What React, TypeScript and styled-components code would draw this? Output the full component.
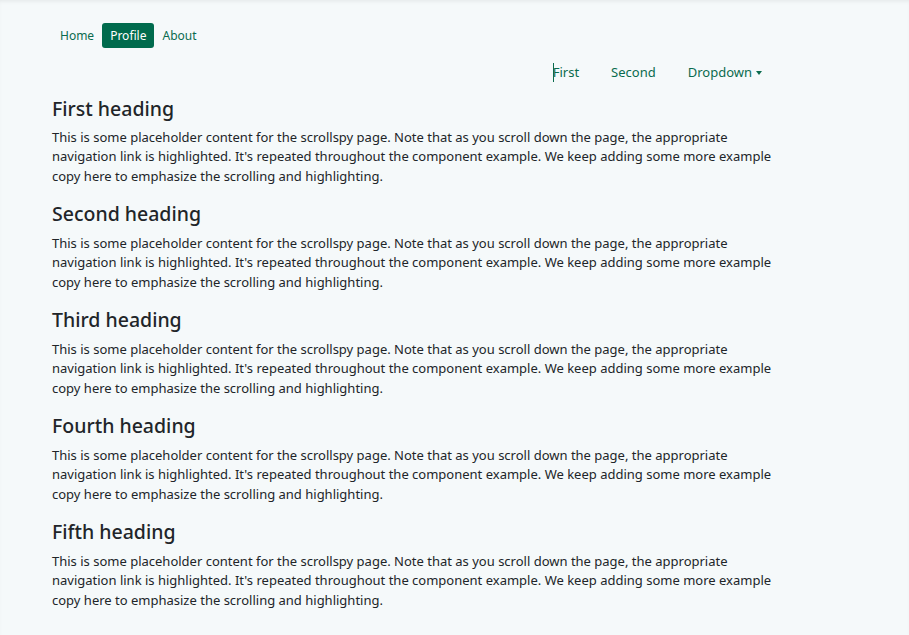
import React from "react";
import styled, { createGlobalStyle } from "styled-components";

const GlobalStyle = createGlobalStyle`
  html, body { margin: 0; padding: 0; }
  body {
    background: #f5f9fa;
    font-family: "Noto Sans", "Open Sans", sans-serif;
    color: #212529;
  }
`;

const Page = styled.div`
  min-height: 635px;
  box-sizing: border-box;
  padding: 23px 0 20px 52px;
  box-shadow: inset 0 3px 4px -2px rgba(0, 0, 0, 0.08);
`;

const Container = styled.div`
  width: 726px;
`;

const Pills = styled.nav`
  display: flex;
  align-items: center;
`;

const PillLink = styled.a<{ $active?: boolean }>`
  display: block;
  font-size: 12px;
  line-height: 17px;
  padding: 4px 8px;
  border-radius: 3px;
  text-decoration: none;
  color: ${(p) => (p.$active ? "#ffffff" : "#0a6b4e")};
  background: ${(p) => (p.$active ? "#006b4d" : "transparent")};
`;

const SpyNav = styled.nav`
  display: flex;
  justify-content: flex-end;
  margin-top: 7px;
`;

const SpyLink = styled.a<{ $caret?: boolean }>`
  position: relative;
  display: flex;
  align-items: center;
  font-size: 13px;
  line-height: 19.5px;
  padding: 8px 16px;
  color: #0a6b4e;
  text-decoration: none;
  ${(p) =>
    p.$caret
      ? `&::before {
    content: "";
    position: absolute;
    left: 16px;
    top: 8px;
    width: 1px;
    height: 19px;
    background: #0a6b4e;
  }`
      : ""}
`;

const Caret = styled.span`
  display: inline-block;
  margin-left: 4px;
  margin-top: 1px;
  width: 0;
  height: 0;
  border-top: 4px solid #0a6b4e;
  border-left: 3.5px solid transparent;
  border-right: 3.5px solid transparent;
`;

const Section = styled.section``;

const Heading = styled.h4`
  margin: 6px 0 7.4px;
  font-size: 19.5px;
  font-weight: 500;
  line-height: 24px;
  color: #212529;
`;

const Paragraph = styled.p`
  margin: 0 0 16.1px;
  font-size: 13px;
  line-height: 19.5px;
`;

const text =
  "This is some placeholder content for the scrollspy page. Note that as you scroll down the page, the appropriate navigation link is highlighted. It's repeated throughout the component example. We keep adding some more example copy here to emphasize the scrolling and highlighting.";

const headings = ["First heading", "Second heading", "Third heading", "Fourth heading", "Fifth heading"];

export default function App() {
  return (
    <>
      <GlobalStyle />
      <Page>
        <Container>
          <Pills>
            <PillLink href="#">Home</PillLink>
            <PillLink href="#" $active>
              Profile
            </PillLink>
            <PillLink href="#">About</PillLink>
          </Pills>
          <SpyNav>
            <SpyLink href="#" $caret>
              First
            </SpyLink>
            <SpyLink href="#">Second</SpyLink>
            <SpyLink href="#">
              Dropdown
              <Caret />
            </SpyLink>
          </SpyNav>
          {headings.map((h) => (
            <Section key={h}>
              <Heading>{h}</Heading>
              <Paragraph>{text}</Paragraph>
            </Section>
          ))}
        </Container>
      </Page>
    </>
  );
}
